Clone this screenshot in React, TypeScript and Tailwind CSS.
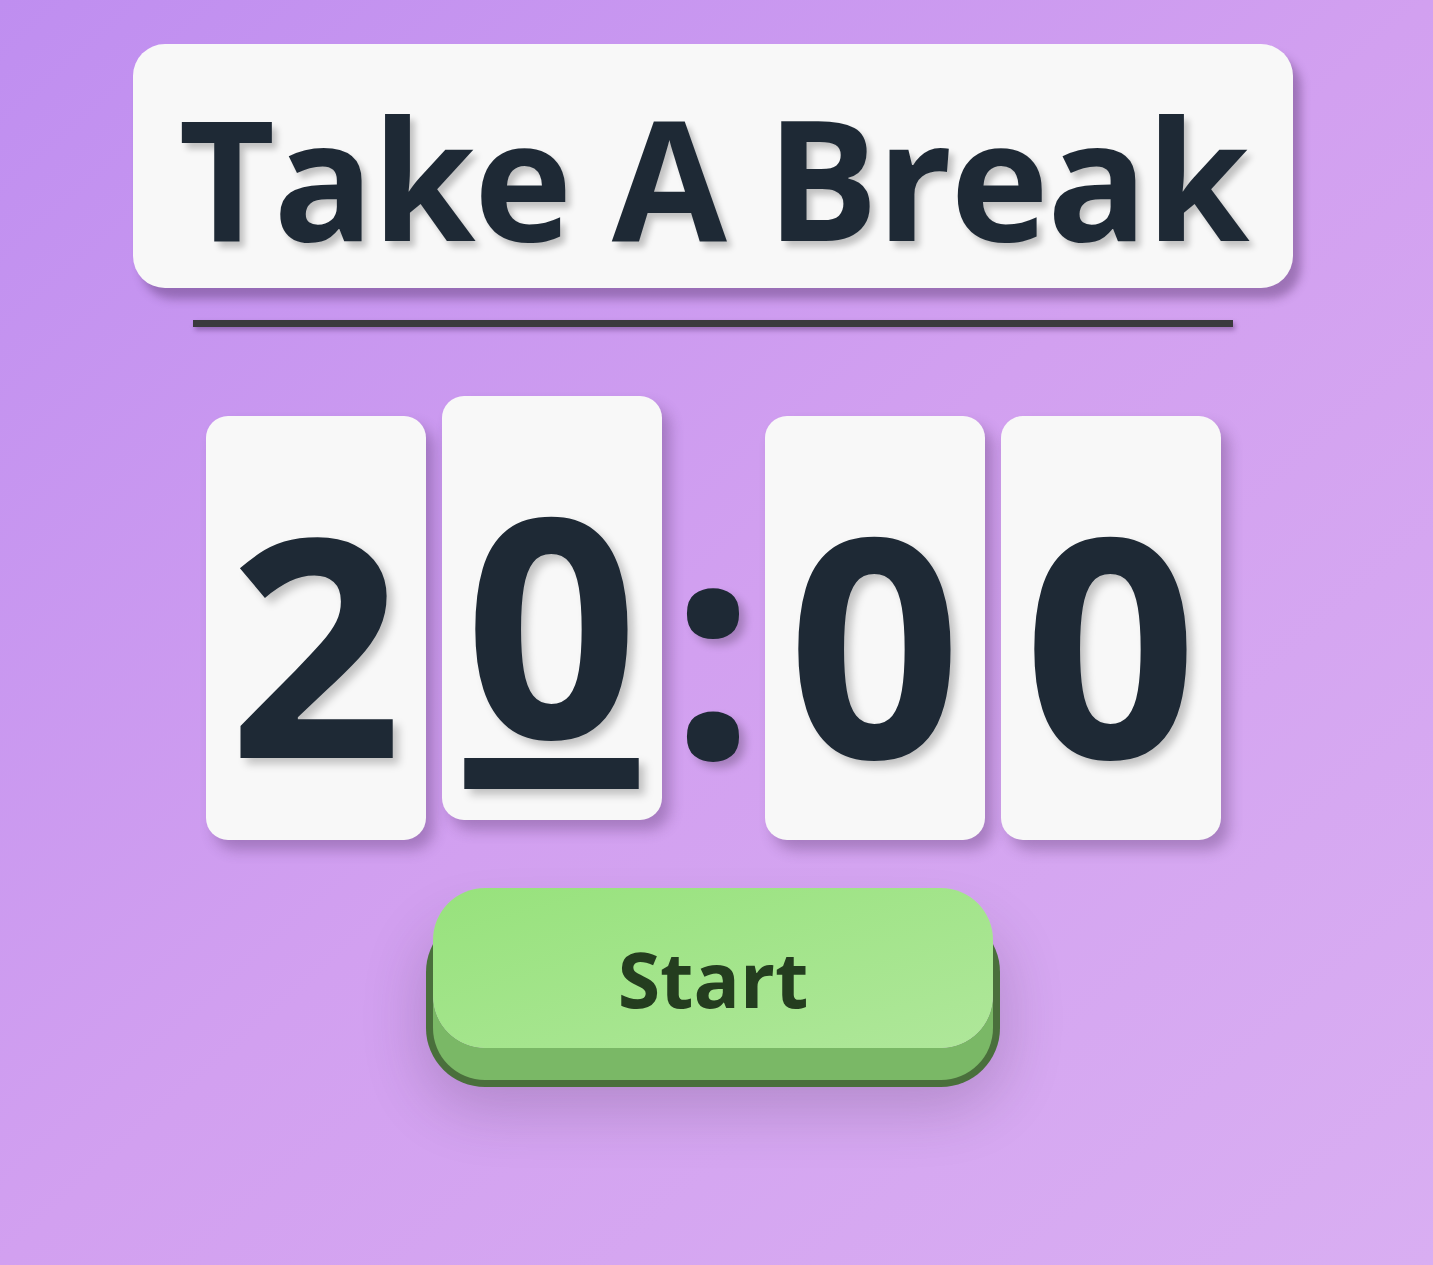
import React from 'react';

const digitFont = { fontFamily: '"Open Sans", "Noto Sans", sans-serif' };

const DigitCard: React.FC<{ value: string; active?: boolean }> = ({ value, active }) => (
  <div
    className={`flex h-[424px] w-[220px] items-center justify-center rounded-[22px] bg-[#f8f8f8] pt-[22px] shadow-[8px_10px_14px_rgba(70,40,90,0.32)] ${
      active ? '-translate-y-5' : ''
    }`}
  >
    <span
      className={`text-[305px] font-bold leading-none text-[#1e2935] [text-shadow:6px_6px_8px_rgba(0,0,0,0.22)] ${
        active ? 'underline decoration-[31px] underline-offset-[20px]' : ''
      }`}
    >
      {value}
    </span>
  </div>
);

export default function App() {
  return (
    <div
      className="min-h-screen w-full bg-linear-to-br from-[#bf8ef0] via-[#d2a0f0] to-[#d9aef2]"
      style={digitFont}
    >
      <div className="flex flex-col items-center pr-[7px] pt-[44px]">
        {/* Title */}
        <div className="flex h-[244px] w-[1160px] items-center justify-center rounded-[32px] bg-[#f8f8f8] pt-[20px] shadow-[8px_11px_10px_rgba(70,40,90,0.38)]">
          <h1 className="text-[167px] font-bold leading-none tracking-[-2px] text-[#1e2935] [text-shadow:5px_6px_6px_rgba(0,0,0,0.22)]">
            Take A Break
          </h1>
        </div>
        <div className="mt-[32px] h-[7px] w-[1040px] bg-[#3b3a3d] shadow-[2px_3px_5px_rgba(40,10,60,0.35)]" />

        {/* Timer */}
        <div className="mt-[89px] flex items-start">
          <div className="flex gap-4">
            <DigitCard value="2" />
            <DigitCard value="0" active />
          </div>
          <div className="flex h-[424px] w-[103px] items-center justify-center pt-[22px]">
            <span className="text-[305px] font-bold leading-none text-[#1e2935] [text-shadow:6px_6px_8px_rgba(0,0,0,0.22)]">
              :
            </span>
          </div>
          <div className="flex gap-4">
            <DigitCard value="0" />
            <DigitCard value="0" />
          </div>
        </div>

        {/* Start button */}
        <button className="mt-[48px] flex h-[160px] w-[560px] items-center justify-center rounded-[52px] bg-linear-to-br from-[#97e27c] to-[#afe79a] pt-[20px] shadow-[0_32px_0_0_#7ab866,0_32px_0_7px_#4a6f3c,0_50px_60px_10px_rgba(60,40,70,0.22)]">
          <span className="text-[77px] font-bold leading-none text-[#243d1f]">Start</span>
        </button>
      </div>
    </div>
  );
}
